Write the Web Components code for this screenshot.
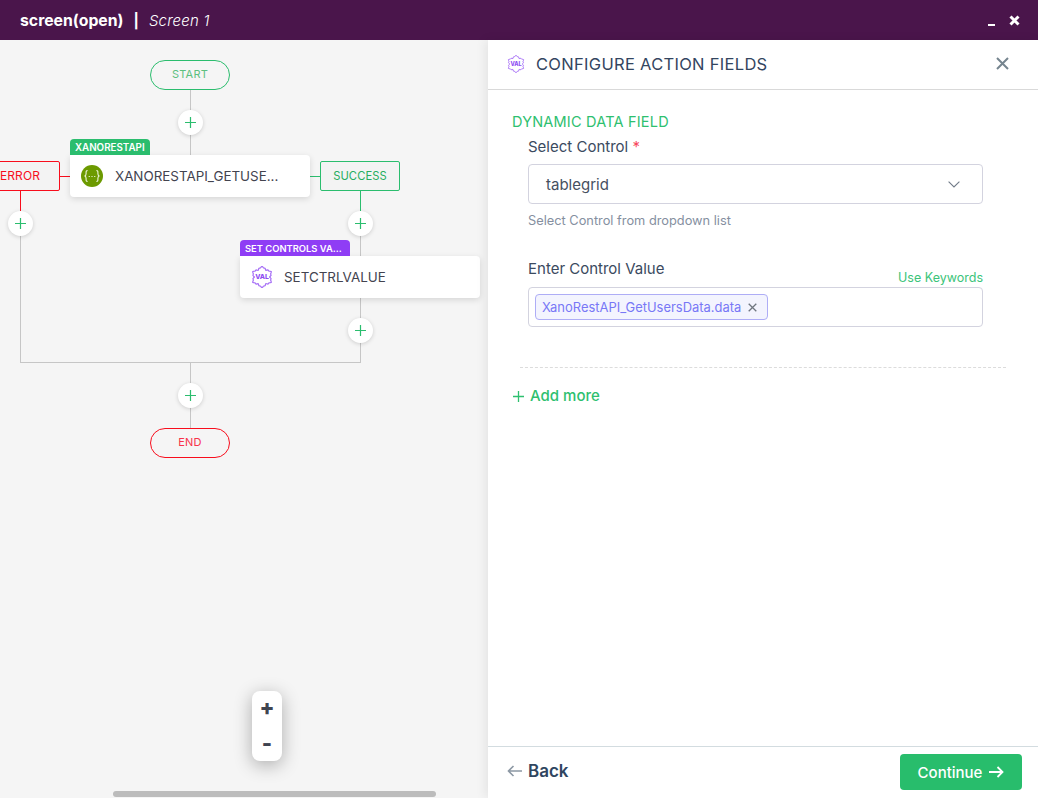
<!DOCTYPE html>
<html>
<head>
<meta charset="utf-8">
<title>Configure action fields</title>
<style>
    html, body { margin: 0; height: 100%; overflow: hidden; background: #fff; }
    body { font-family: Inter, "Liberation Sans", sans-serif; }
</style>
</head>
<body>
<app-shell>
    <top-bar slot="top" heading="screen(open)" sub="Screen 1"></top-bar>
    <flow-canvas slot="left">
        <flow-pill x="150" y="60" tone="green">START</flow-pill>
        <flow-add x="190" y="122"></flow-add>
        <flow-node x="70" y="155" tag="XANORESTAPI" tone="green" icon="code" tagsize="9.8">XANORESTAPI_GETUSE...</flow-node>
        <flow-branch x="-20" y="161" tone="red">ERROR</flow-branch>
        <flow-branch x="320" y="161" tone="green">SUCCESS</flow-branch>
        <flow-add x="20" y="223"></flow-add>
        <flow-add x="360" y="223"></flow-add>
        <flow-node x="240" y="256" tag="SET CONTROLS VA..." tone="purple" icon="val" tagwidth="110" tagsize="9.4">SETCTRLVALUE</flow-node>
        <flow-add x="360" y="330"></flow-add>
        <flow-add x="190" y="395"></flow-add>
        <flow-pill x="150" y="428" tone="red">END</flow-pill>
        <zoom-box></zoom-box>
    </flow-canvas>
    <config-panel slot="right" heading="CONFIGURE ACTION FIELDS">
        <section-title>DYNAMIC DATA FIELD</section-title>
        <form-field label="Select Control" required help="Select Control from dropdown list">
            <select-box>tablegrid</select-box>
        </form-field>
        <form-field label="Enter Control Value" link="Use Keywords">
            <tag-input><value-chip>XanoRestAPI_GetUsersData.data</value-chip></tag-input>
        </form-field>
        <add-more>Add more</add-more>
    </config-panel>
</app-shell>

<script>
    // icone partagee : hexagone ondule avec VAL au milieu
    function valIcon(size) {
        let d = '';
        for (let i = 0; i < 72; i++) {
            const a = i / 72 * Math.PI * 2;
            const r = 10 + 1.1 * Math.cos(a * 6) + 0.6 * Math.cos(a * 18);
            d += (i ? 'L' : 'M') + (12 + r * Math.sin(a)).toFixed(2) + ' ' + (12 - r * Math.cos(a)).toFixed(2);
        }
        return `<svg width="${size}" height="${size}" viewBox="0 0 24 24" style="display:block">
            <path d="${d}Z" fill="none" stroke="#a56df6" stroke-width="1.3" stroke-linejoin="round"/>
            <text x="12" y="14.6" text-anchor="middle" font-family="Inter, sans-serif" font-size="7.4" font-weight="800" fill="#8e4df2">VAL</text>
        </svg>`;
    }

    const TONES = { green: '#2bbd6e', red: '#f80d1c', purple: '#8f3df5' };

    class AppShell extends HTMLElement {
        constructor() {
            super();
            this.attachShadow({ mode: 'open' });
            this.shadowRoot.innerHTML = `
                <style>
                    :host { display: flex; flex-direction: column; height: 798px; }
                    .main { flex: 1; display: flex; min-height: 0; }
                </style>
                <slot name="top"></slot>
                <div class="main">
                    <slot name="left"></slot>
                    <slot name="right"></slot>
                </div>`;
        }
    }

    class TopBar extends HTMLElement {
        constructor() {
            super();
            this.attachShadow({ mode: 'open' });
        }
        connectedCallback() {
            this.shadowRoot.innerHTML = `
                <style>
                    :host { display: flex; align-items: center; height: 40px; flex: none; padding: 0 18px 0 20px; background: #4a154b; color: #fff; }
                    b { font: 700 15.800px Inter, sans-serif; }
                    .sep { font: 700 14.500px Inter, sans-serif; margin: 0 10px; }
                    i { font: italic 300 15px Inter, sans-serif; letter-spacing: .2px; }
                    .tools { margin-left: auto; display: flex; align-items: center; gap: 13px; }
                    svg { display: block; }
                </style>
                <b>${this.getAttribute('heading')}</b><span class="sep">|</span><i>${this.getAttribute('sub')}</i>
                <div class="tools">
                    <svg width="9" height="12" viewBox="0 0 9 12"><rect x="1" y="10" width="7" height="2" fill="#fff"/></svg>
                    <svg width="11" height="11" viewBox="0 0 11 11"><path d="M1.500 1.500l8 8M9.500 1.500l-8 8" stroke="#fff" stroke-width="3"/></svg>
                </div>`;
        }
    }

    class FlowCanvas extends HTMLElement {
        constructor() {
            super();
            this.attachShadow({ mode: 'open' });
            this.shadowRoot.innerHTML = `
                <style>
                    :host { display: block; position: relative; width: 488px; flex: none; background: #f5f5f5; overflow: hidden; }
                    svg { position: absolute; left: 0; top: 0; }
                    .bar { position: absolute; left: 113px; top: 751px; width: 323px; height: 6px; border-radius: 3px; background: #bcbcbc; }
                </style>
                <svg width="488" height="758" shape-rendering="crispEdges" fill="none">
                    <g stroke="#c6c6c6" stroke-width="1">
                        <path d="M190.500 50v65M20.500 190v132.500h340M360.500 190v132.500M190.500 322.500v65"/>
                    </g>
                    <path d="M60 136.500h10M20.500 151v20" stroke="#f80d1c"/>
                    <path d="M310 136.500h10M360.500 151v20" stroke="#2bbd6e"/>
                </svg>
                <slot></slot>
                <div class="bar"></div>`;
        }
    }

    // les noeuds sont places sur le canvas (y relatif au haut de la page)
    class CanvasItem extends HTMLElement {
        constructor() {
            super();
            this.attachShadow({ mode: 'open' });
        }
        connectedCallback() {
            this.style.left = this.getAttribute('x') + 'px';
            this.style.top = (parseInt(this.getAttribute('y')) - 40) + 'px';
            this.render();
        }
    }

    class FlowPill extends CanvasItem {
        render() {
            const c = TONES[this.getAttribute('tone')];
            const text = this.getAttribute('tone') === 'red' ? '#f8334a' : '#5cc07f';
            this.shadowRoot.innerHTML = `
                <style>
                    :host { position: absolute; display: flex; align-items: center; justify-content: center; box-sizing: border-box; width: 80px; height: 30px; border: 1px solid ${c}; border-radius: 15px; background: #f5f5f5; color: ${text}; font: 400 11px Inter, sans-serif; letter-spacing: .2px; padding-bottom: 2px; }
                </style>
                <slot></slot>`;
        }
    }

    class FlowBranch extends CanvasItem {
        render() {
            const tone = this.getAttribute('tone');
            const c = TONES[tone];
            this.shadowRoot.innerHTML = `
                <style>
                    :host { position: absolute; display: flex; align-items: center; justify-content: center; box-sizing: border-box; width: 80px; height: 30px; border: 1px solid ${c}; border-radius: 2px; background: #f3f3f3; color: ${tone === 'red' ? '#f80d1c' : '#27ae60'}; font: 400 ${tone === 'red' ? 12 : 11.200}px Inter, sans-serif; letter-spacing: .1px; padding-bottom: ${tone === 'red' ? 2 : 1}px; }
                </style>
                <slot></slot>`;
        }
    }

    class FlowAdd extends CanvasItem {
        render() {
            this.shadowRoot.innerHTML = `
                <style>
                    :host { position: absolute; display: flex; align-items: center; justify-content: center; width: 25px; height: 25px; margin: -12px 0 0 -12px; border-radius: 50%; background: #fff; box-shadow: 0 1px 4px rgba(0,0,0,.16); }
                    svg { display: block; }
                </style>
                <svg width="11" height="11" viewBox="0 0 11 11"><path d="M5.500 0v11M0 5.500h11" stroke="#2bbd6e" stroke-width="1.200"/></svg>`;
        }
    }

    class FlowNode extends CanvasItem {
        render() {
            const c = TONES[this.getAttribute('tone')];
            const icon = this.getAttribute('icon') === 'val' ? valIcon(22) : `
                <svg width="22" height="22" viewBox="0 0 22 22" style="display:block">
                    <circle cx="11" cy="11" r="11" fill="#6c9a00"/>
                    <path d="M6.600 5.500c-1.800 0-1.500 1.400-1.500 3 0 1.400-.4 2-1.100 2.500.7.500 1.100 1.100 1.100 2.500 0 1.600-.3 3 1.500 3M15.400 5.500c1.800 0 1.500 1.400 1.500 3 0 1.400.4 2 1.100 2.500-.7.500-1.100 1.100-1.100 2.500 0 1.600.3 3-1.500 3" fill="none" stroke="#eef5dc" stroke-width="1.100"/>
                    <path d="M7.700 11.500h1.100M10.450 11.500h1.100M13.200 11.500h1.100" stroke="#eef5dc" stroke-width="1.100"/>
                </svg>`;
            this.shadowRoot.innerHTML = `
                <style>
                    :host { position: absolute; display: flex; align-items: center; box-sizing: border-box; width: 240px; height: 42px; padding: 0 0 1px 11px; background: #fff; border-radius: 0 4px 4px 4px; box-shadow: 0 2px 6px rgba(0,0,0,.13); color: #43434f; }
                    .tag { position: absolute; left: 0; bottom: 100%; box-sizing: border-box; width: ${this.getAttribute('tagwidth') || 80}px; height: 16px; padding-left: 5px; border-radius: 4px 4px 0 0; background: ${c}; color: #fff; font: 600 ${this.getAttribute('tagsize')}px/17px Inter, sans-serif; white-space: nowrap; }
                    .label { margin-left: ${this.getAttribute('icon') === 'val' ? 11 : 12}px; font: 400 13.400px Inter, sans-serif; white-space: nowrap; }
                </style>
                <div class="tag">${this.getAttribute('tag')}</div>
                ${icon}
                <span class="label"><slot></slot></span>`;
        }
    }

    class ZoomBox extends HTMLElement {
        constructor() {
            super();
            this.attachShadow({ mode: 'open' });
            this.shadowRoot.innerHTML = `
                <style>
                    :host { position: absolute; left: 252px; top: 651px; width: 30px; height: 70px; display: flex; flex-direction: column; align-items: center; background: #fff; border-radius: 8px; box-shadow: 0 4px 18px rgba(0,0,0,.3); color: #3f4450; font: 800 22px/1 Inter, sans-serif; }
                    span { display: block; height: 36px; line-height: 32px; }
                    span + span { line-height: 34px; }
                </style>
                <span>+</span><span>-</span>`;
        }
    }

    class ConfigPanel extends HTMLElement {
        constructor() {
            super();
            this.attachShadow({ mode: 'open' });
        }
        connectedCallback() {
            this.shadowRoot.innerHTML = `
                <style>
                    :host { flex: 1; min-width: 0; display: flex; flex-direction: column; position: relative; background: #fff; box-shadow: -3px 0 10px rgba(0,0,0,.07); color: #334560; }
                    header { flex: none; box-sizing: border-box; height: 50px; display: flex; align-items: center; padding: 0 29px 2px 19px; border-bottom: 1px solid #d9d9d9; }
                    h1 { margin: 0 0 0 11px; font: 400 16.500px Inter, sans-serif; letter-spacing: .3px; color: #334560; }
                    .close { margin-left: auto; display: block; }
                    .body { flex: 1; padding: 24px 32px 0 24px; }
                    footer { flex: none; box-sizing: border-box; height: 52px; display: flex; align-items: flex-start; justify-content: space-between; padding: 7px 16px 0 19px; border-top: 1px solid #d3dce0; }
                    .back { display: flex; align-items: center; gap: 6px; height: 34px; font: 600 17px Inter, sans-serif; color: #2f4560; }
                    .next { display: flex; align-items: center; justify-content: center; gap: 7px; width: 122px; height: 36px; border-radius: 4px; background: #28bd6c; color: #fff; font: 500 15px Inter, sans-serif; }
                    svg { display: block; }
                </style>
                <header>
                    ${valIcon(18)}
                    <h1>${this.getAttribute('heading')}</h1>
                    <svg class="close" width="13" height="13" viewBox="0 0 13 13"><path d="M1 1l11 11M12 1L1 12" stroke="#76858f" stroke-width="2"/></svg>
                </header>
                <div class="body"><slot></slot></div>
                <footer>
                    <div class="back">
                        <svg width="15" height="12" viewBox="0 0 15 12"><path d="M15 6H1.500M6.500 1l-5 5 5 5" fill="none" stroke="#8c98a4" stroke-width="1.600"/></svg>
                        Back
                    </div>
                    <div class="next">
                        Continue
                        <svg width="15" height="12" viewBox="0 0 15 12"><path d="M0 6h13.500M8.500 1l5 5-5 5" fill="none" stroke="#fff" stroke-width="1.800"/></svg>
                    </div>
                </footer>`;
        }
    }

    class SectionTitle extends HTMLElement {
        constructor() {
            super();
            this.attachShadow({ mode: 'open' });
            this.shadowRoot.innerHTML = `
                <style>
                    :host { display: block; height: 17px; margin: -1px 0 7px; color: #2ec06f; font: 400 14.500px/17px Inter, sans-serif; letter-spacing: .2px; white-space: nowrap; }
                </style>
                <slot></slot>`;
        }
    }

    class FormField extends HTMLElement {
        constructor() {
            super();
            this.attachShadow({ mode: 'open' });
        }
        connectedCallback() {
            const req = this.hasAttribute('required') ? ' <em>*</em>' : '';
            const link = this.getAttribute('link');
            const help = this.getAttribute('help');
            this.shadowRoot.innerHTML = `
                <style>
                    :host { display: block; padding: 0 23px 0 16px; margin-bottom: 30px; }
                    .head { display: flex; justify-content: space-between; align-items: flex-end; height: 26px; margin-bottom: 1px; }
                    label { font: 400 15px/20px Inter, sans-serif; color: #3b4a60; align-self: flex-start; }
                    em { font-style: normal; color: #f8485e; }
                    a { font: 400 12.500px/16px Inter, sans-serif; color: #3cc47a; margin-bottom: -1px; }
                    .help { margin-top: 9px; font: 400 12.800px/16px Inter, sans-serif; color: #858f9f; }
                </style>
                <div class="head"><label>${this.getAttribute('label')}${req}</label>${link ? `<a>${link}</a>` : ''}</div>
                <slot></slot>
                ${help ? `<div class="help">${help}</div>` : ''}`;
        }
    }

    class SelectBox extends HTMLElement {
        constructor() {
            super();
            this.attachShadow({ mode: 'open' });
            this.shadowRoot.innerHTML = `
                <style>
                    :host { display: flex; align-items: center; box-sizing: border-box; height: 40px; padding: 0 22px 0 17px; border: 1px solid #d3d3df; border-radius: 4px; font: 400 15px Inter, sans-serif; color: #46505f; }
                    svg { margin-left: auto; display: block; }
                </style>
                <slot></slot>
                <svg width="12" height="7" viewBox="0 0 12 7"><path d="M.6.6L6 6l5.400-5.400" fill="none" stroke="#717b88" stroke-width="1.100"/></svg>`;
        }
    }

    class TagInput extends HTMLElement {
        constructor() {
            super();
            this.attachShadow({ mode: 'open' });
            this.shadowRoot.innerHTML = `
                <style>
                    :host { display: flex; align-items: center; box-sizing: border-box; height: 40px; margin-top: 2px; padding: 0 6px; border: 1px solid #d3d3df; border-radius: 4px; }
                </style>
                <slot></slot>`;
        }
    }

    class ValueChip extends HTMLElement {
        constructor() {
            super();
            this.attachShadow({ mode: 'open' });
            this.shadowRoot.innerHTML = `
                <style>
                    :host { display: flex; align-items: center; box-sizing: border-box; height: 26px; padding: 0 10px 0 6px; gap: 7px; border: 1px solid #aeadf6; border-radius: 4px; background: #f3f4fe; color: #7878f6; font: 400 12.950px Inter, sans-serif; white-space: nowrap; }
                    svg { display: block; }
                </style>
                <slot></slot>
                <svg width="9" height="9" viewBox="0 0 9 9"><path d="M.7.7l7.600 7.600M8.300.7L.7 8.300" stroke="#6f7680" stroke-width="1.300"/></svg>`;
        }
    }

    class AddMore extends HTMLElement {
        constructor() {
            super();
            this.attachShadow({ mode: 'open' });
            this.shadowRoot.innerHTML = `
                <style>
                    :host { display: block; margin: 40px 0 0 8px; padding-top: 18px; border-top: 1px dashed #dcdcdc; color: #2ec06f; font: 500 15px/20px Inter, sans-serif; }
                    span { display: flex; align-items: center; gap: 6px; margin-left: -7px; }
                    svg { display: block; }
                </style>
                <span>
                    <svg width="11" height="11" viewBox="0 0 11 11"><path d="M5.500 0v11M0 5.500h11" stroke="#2ec06f" stroke-width="1.300"/></svg>
                    <slot></slot>
                </span>`;
        }
    }

    customElements.define('app-shell', AppShell);
    customElements.define('top-bar', TopBar);
    customElements.define('flow-canvas', FlowCanvas);
    customElements.define('flow-pill', FlowPill);
    customElements.define('flow-branch', FlowBranch);
    customElements.define('flow-add', FlowAdd);
    customElements.define('flow-node', FlowNode);
    customElements.define('zoom-box', ZoomBox);
    customElements.define('config-panel', ConfigPanel);
    customElements.define('section-title', SectionTitle);
    customElements.define('form-field', FormField);
    customElements.define('select-box', SelectBox);
    customElements.define('tag-input', TagInput);
    customElements.define('value-chip', ValueChip);
    customElements.define('add-more', AddMore);
</script>
</body>
</html>
